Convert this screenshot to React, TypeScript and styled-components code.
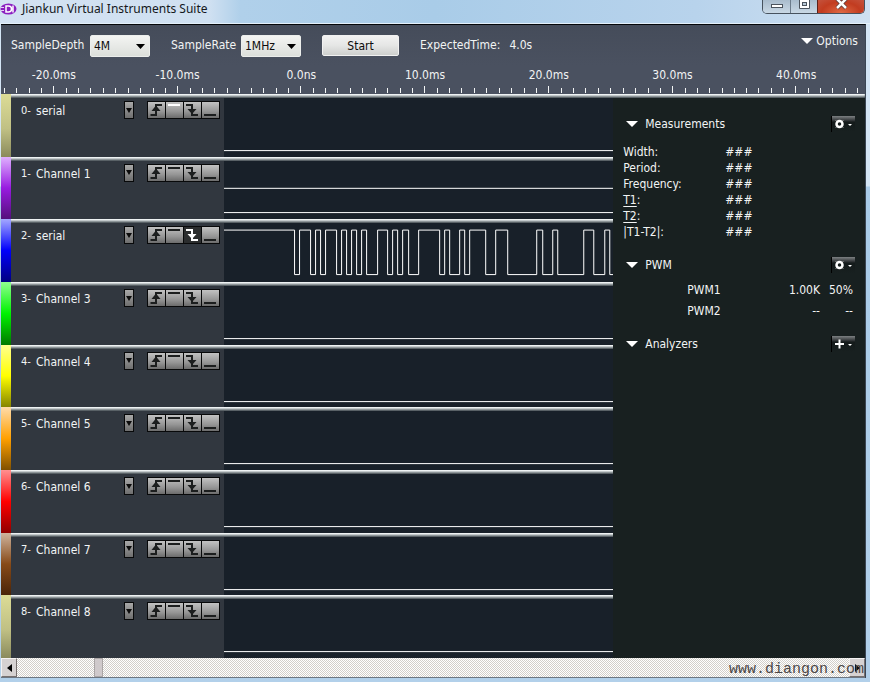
import React, { useState } from "react";
import styled, { createGlobalStyle } from "styled-components";

const Global = createGlobalStyle`
  * { box-sizing: border-box; }
  body { margin: 0; background: #b4d0ea; }
  button, select, input { font: inherit; margin: 0; padding: 0; }
`;

const uiFont = `"DejaVu Sans Condensed", "DejaVu Sans", sans-serif`;

const Window = styled.div`
  position: relative;
  display: flex;
  flex-direction: column;
  min-height: 100vh;
  padding: 0 4px 4px 1px;
  font: 12px/16px ${uiFont};
  font-stretch: condensed;
  color: #f2f4f4;
  background: linear-gradient(#d4e5f5 0, #d4e5f5 186px, #a9cbe8 187px, #b2d0ea 100%);
  overflow: hidden;
`;

const TitleBar = styled.header`
  display: flex;
  align-items: flex-start;
  height: 24px;
  margin: 0 -4px 0 -1px;
  padding-right: 5px;
  border-bottom: 1px solid #e4f0fa;
  background: linear-gradient(90deg, #d3e2f2 0, #cfe0f1 210px, #b0d0ea 240px, #a9cce8 50%, #b8d3ec 80%, #cfe0f1 100%);
`;

const Title = styled.h1`
  flex: 1;
  display: flex;
  align-items: center;
  gap: 5px;
  margin: 0;
  font: 12px/18px "Noto Sans", "Open Sans", sans-serif;
  color: #15181c;
`;

const WindowButtons = styled.div`
  display: flex;
  height: 14px;
  border: 1px solid #47525e;
  border-top: 0;
  border-radius: 0 0 5px 5px;
  overflow: hidden;
`;

const WindowButton = styled.button<{ $close?: boolean }>`
  display: flex;
  justify-content: center;
  width: ${(p) => (p.$close ? 47 : 27)}px;
  border: 0;
  border-left: ${(p) => (p.$close ? "1px solid #5d2018" : "1px solid #6b7b8b")};
  background: ${(p) =>
    p.$close
      ? "radial-gradient(ellipse at 50% 100%, #e06a45, #c23c20 60%, #c4533e)"
      : "linear-gradient(#a9bccd, #c9d8e5)"};
  &:first-child { border-left: 0; }
`;

const Analyzer = styled.main`
  flex: 1;
  display: flex;
  flex-direction: column;
  border-top: 1px solid #05070a;
  border-right: 1px solid #3b4654;
  background: #182020;
`;

const Toolbar = styled.div`
  display: flex;
  align-items: flex-start;
  gap: 21px;
  height: 40px;
  padding: 10px 7px 0 10px;
  background: linear-gradient(#454c5a, #4a5160);
`;

const Field = styled.div<{ $label: number }>`
  display: grid;
  grid-template-columns: ${(p) => p.$label}px 60px;
  line-height: 20px;
`;

const SelectBox = styled.div<{ $h: number }>`
  display: grid;
  align-items: center;
  height: ${(p) => p.$h}px;
  > * { grid-area: 1 / 1; }
  > svg { justify-self: end; margin-right: 5px; pointer-events: none; }
`;

const Select = styled.select`
  appearance: none;
  width: 100%;
  height: 100%;
  padding-left: 3px;
  border: 1px solid #eceeec;
  border-radius: 2px;
  color: #0c0c0c;
  background: linear-gradient(#f3f4f2, #dcdfdb);
`;

const StartButton = styled.button`
  width: 77px;
  height: 21px;
  border: 1px solid #f1f1f1;
  border-radius: 2px;
  color: #0c0c0c;
  background: linear-gradient(#f2f2f2, #e5e6e5 50%, #cdcfcd);
`;

const Expected = styled.output`
  display: flex;
  gap: 9px;
  line-height: 20px;
`;

const OptionsButton = styled.button`
  display: flex;
  align-items: center;
  gap: 3px;
  margin-left: auto;
  height: 12px;
  border: 0;
  color: inherit;
  background: none;
`;

const Ruler = styled.div`
  display: flex;
  height: 29px;
  background: #4a5160;
  overflow: hidden;
`;

const RulerTrack = styled.div`
  flex: 1;
  display: flex;
  margin-left: -9px;
  margin-right: 7px;
`;

const RulerCell = styled.div`
  flex: 1;
  display: flex;
  flex-direction: column;
  justify-content: space-between;
  text-align: center;
  line-height: 20px;
  svg { display: block; width: 100%; height: 8px; overflow: visible; }
`;

const groove = "linear-gradient(#eef2f3 0 1px, #c3c9cb 1px 2px, #8d9598 2px 3px, #596166 3px 4px)";

const Body = styled.div`
  flex: 1;
  display: grid;
  grid-template-columns: minmax(0, 613fr) minmax(0, 252fr);
`;

const Channels = styled.section`
  display: flex;
  flex-direction: column;
`;

const Channel = styled.div`
  flex: 1 1 62px;
  display: grid;
  grid-template-columns: 10px 213px minmax(0, 1fr);
`;

const Stripe = styled.div<{ $colors: string }>`
  background: linear-gradient(${(p) => p.$colors});
`;

const ChannelHead = styled.div`
  display: flex;
  align-items: flex-start;
  padding: 7px 4px 0 10px;
  background: ${groove} top / 100% 4px no-repeat, #31373f;
`;

const ChannelName = styled.div`
  flex: 1;
  display: flex;
  gap: 3px;
  line-height: 20px;
`;

const ChannelNumber = styled.span`
  width: 12px;
  font-size: 11px;
  white-space: nowrap;
`;

const MenuButton = styled.button`
  display: grid;
  place-items: center;
  width: 10px;
  height: 18px;
  margin-right: 13px;
  border: 1px solid #08090a;
  background: linear-gradient(#a8a8a8, #6e6e6e);
`;

const Triggers = styled.div`
  display: flex;
  gap: 1px;
  height: 18px;
  padding: 1px;
  background: #08090a;
`;

const TriggerButton = styled.button<{ $on?: boolean; $dark?: boolean }>`
  width: 17px;
  height: 16px;
  border: 0;
  color: ${(p) => (p.$on ? "#ffffff" : "#1c1e1e")};
  background: ${(p) => (p.$dark ? "#2b2d2e" : "linear-gradient(#c2c2c2, #959595 60%, #6c6c6c)")};
  svg { display: block; }
`;

const Plot = styled.div`
  display: flex;
  padding-top: 4px;
  background: ${groove} top / 100% 4px no-repeat, #182029;
  svg { flex: 1; width: 100%; height: 100%; min-height: 0; }
`;

const Side = styled.aside`
  padding: 18px 10px 0 10px;
  background: ${groove} top / 100% 4px no-repeat, #182020;
`;

const PanelHead = styled.div`
  display: flex;
  justify-content: space-between;
  align-items: center;
  height: 24px;
`;

const PanelToggle = styled.button`
  display: flex;
  align-items: center;
  gap: 7px;
  padding-left: 3px;
  border: 0;
  color: inherit;
  background: none;
`;

const GearButton = styled.button`
  display: grid;
  place-items: center;
  width: 24px;
  height: 16px;
  border: 0;
  border-left: 1px solid #000;
  background: linear-gradient(#7d8183, #2a2e30 5px, #10151580 6px, #182020);
`;

const Measures = styled.table`
  margin: 8px 0 13px;
  border-spacing: 0;
  th, td { padding: 0; text-align: left; font-weight: normal; }
  th { width: 102px; }
  a { color: inherit; text-underline-offset: 2px; }
`;

const PwmTable = styled.table`
  width: 100%;
  margin: 3px 0 10px;
  border-spacing: 0;
  line-height: 21px;
  th, td { padding: 0; font-weight: normal; text-align: right; }
  th { padding-left: 64px; text-align: left; }
  td:last-child { width: 35px; padding-right: 2px; }
`;

const ScrollRow = styled.div`
  display: flex;
  height: 20px;
  border-bottom: 1px solid #6c7682;
  background: repeating-conic-gradient(#d2cfca 0 25%, #ffffff 0 50%) 0 0 / 2px 2px;
`;

const ScrollButton = styled.button`
  display: grid;
  place-items: center;
  width: 16px;
  border: 1px solid #f4f2f2;
  border-right-color: #77706f;
  border-bottom-color: #77706f;
  background: #d6d2d2;
`;

const ScrollRange = styled.input`
  appearance: none;
  flex: 1;
  min-width: 0;
  height: 19px;
  background: none;
  &::-webkit-slider-thumb {
    appearance: none;
    width: 9px;
    height: 19px;
    border: 1px solid #aaa5a5;
    background: #cfc9cb;
  }
`;

const Watermark = styled.div`
  position: absolute;
  right: 6px;
  bottom: 2px;
  font: 15px/20px "Liberation Mono", monospace;
  color: #4a4646;
  pointer-events: none;
`;

const Down = ({ w = 12, h = 6, fill = "#fff" }: { w?: number; h?: number; fill?: string }) => (
  <svg width={w} height={h} viewBox="0 0 12 6" preserveAspectRatio="none" aria-hidden="true">
    <path d="M0 0H12L6 6Z" fill={fill} />
  </svg>
);

const triggerPaths = [
  <><path d="M2.500 13H8V3h6" /><path d="M3.500 9 8 3.500 12.500 9z" fill="currentColor" stroke="none" /></>,
  <path d="M2 3h12" />,
  <><path d="M2 3h6v10h6" /><path d="M3.500 7h9L8 12z" fill="currentColor" stroke="none" /></>,
  <path d="M2 13h12" />,
];
const triggerNames = ["Rising edge", "High level", "Falling edge", "Low level"];

const khaki = "#dcdc96, #c0c084 55%, #8a8a5c";
const channels = [
  { name: "serial", colors: khaki },
  { name: "Channel 1", colors: "#dfb0ff, #981be0 50%, #54107c" },
  { name: "serial", colors: "#a4a8ff, #0000fa 50%, #000080" },
  { name: "Channel 3", colors: "#90ff90, #00f200 50%, #007800" },
  { name: "Channel 4", colors: "#ffff90, #ffff00 50%, #848400" },
  { name: "Channel 5", colors: "#ffdcac, #ffa000 50%, #805000" },
  { name: "Channel 6", colors: "#ff9090, #ff0000 50%, #900000" },
  { name: "Channel 7", colors: "#cfb49e, #874a18 50%, #4a2408" },
  { name: "Channel 8", colors: khaki },
];

const edges = [
  70, 75, 86, 91, 96, 101, 112, 117, 122, 127, 132, 137, 142, 153, 163, 168, 173, 178, 184, 194,
  215, 220, 225, 235, 240, 245, 261, 271, 283, 312, 318, 328, 333, 359, 369, 380, 385,
];

const serialTrace = () => {
  let high = true;
  let d = "M0 7";
  for (const x of edges) {
    high = !high;
    d += `H${x + 0.5}V${high ? 7 : 51}`;
  }
  return d + "H389";
};

const traceFor = (i: number) => {
  if (i === 1) return "M0 27H389M0 51H389";
  if (i === 2) return serialTrace();
  return "M0 52H389";
};

const TriggerGroup = ({ initial }: { initial: number }) => {
  const [on, setOn] = useState(initial);
  return (
    <Triggers role="group" aria-label="Trigger">
      {triggerPaths.map((p, k) => (
        <TriggerButton
          key={k}
          $on={on === k}
          $dark={on === k && k % 2 === 0}
          aria-label={triggerNames[k]}
          aria-pressed={on === k}
          onClick={() => setOn(k)}
        >
          <svg width="17" height="16" viewBox="0 0 17 16" fill="none" stroke="currentColor" strokeWidth="2">
            {p}
          </svg>
        </TriggerButton>
      ))}
    </Triggers>
  );
};

const Panel = ({ title, plus }: { title: string; plus?: boolean }) => (
  <PanelHead>
    <PanelToggle><Down />{title}</PanelToggle>
    <GearButton aria-label={`${title} settings`}>
      <svg width="20" height="12" viewBox="0 0 20 12" fill="none" stroke="#fff" strokeWidth="2">
        {plus ? <path d="M2 6h9M6.500 1.500v9" /> : <><circle cx="6.500" cy="6" r="3" strokeWidth="2.500" /><path d="M3 2.500l1 1M10 2.500l-1 1M3 9.500l1-1M10 9.500l-1-1" strokeWidth="1" /></>}
        <path d="M15 6h4l-2 2z" fill="#fff" stroke="none" />
      </svg>
    </GearButton>
  </PanelHead>
);

const measures = ["Width:", "Period:", "Frequency:", "T1", "T2", "|T1-T2|:"];
const times = ["-20.0ms", "-10.0ms", "0.0ns", "10.0ms", "20.0ms", "30.0ms", "40.0ms"];

export default function App() {
  return (
    <>
      <Global />
      <Window>
        <TitleBar>
          <Title>
            <svg width="17" height="14" viewBox="0 0 17 14" aria-hidden="true">
              <ellipse cx="8.500" cy="7" rx="8" ry="5.500" fill="#8b1fc0" />
              <path d="M1 5.500h3M1 8.500h3" stroke="#e8cff4" />
              <path d="M6 4v6h2.500a3 3 0 0 0 0-6zM13 3.500v7" fill="none" stroke="#fff" strokeWidth="1.500" />
            </svg>
            Jiankun Virtual Instruments Suite
          </Title>
          <WindowButtons>
            <WindowButton aria-label="Minimize">
              <svg width="13" height="12" viewBox="0 0 13 12"><rect x="1.500" y="4.500" width="11" height="3" fill="#fff" stroke="#4b535d" /></svg>
            </WindowButton>
            <WindowButton aria-label="Maximize">
              <svg width="13" height="12" viewBox="0 0 13 12"><path d="M1.500-1V8.500h10V-1" fill="#fff" stroke="#4b535d" /><rect x="4.500" y="2.500" width="4" height="3" fill="#b8c8d6" stroke="#4b535d" /></svg>
            </WindowButton>
            <WindowButton $close aria-label="Close">
              <svg width="13" height="12" viewBox="0 0 13 12"><path d="M2-1 11 8M11-1 2 8" stroke="#5a3a3a" strokeWidth="4" /><path d="M2-1 11 8M11-1 2 8" stroke="#fff" strokeWidth="2.500" /></svg>
            </WindowButton>
          </WindowButtons>
        </TitleBar>
        <Analyzer>
          <Toolbar>
            <Field $label={79}>
              <label htmlFor="depth">SampleDepth</label>
              <SelectBox $h={21}>
                <Select id="depth" defaultValue="4M"><option>4M</option><option>8M</option></Select>
                <Down w={9} h={5} fill="#000" />
              </SelectBox>
            </Field>
            <Field $label={70}>
              <label htmlFor="rate">SampleRate</label>
              <SelectBox $h={18}>
                <Select id="rate" defaultValue="1MHz"><option>1MHz</option><option>2MHz</option></Select>
                <Down w={9} h={5} fill="#000" />
              </SelectBox>
            </Field>
            <StartButton>Start</StartButton>
            <Expected><span>ExpectedTime:</span><span>4.0s</span></Expected>
            <OptionsButton><Down />Options</OptionsButton>
          </Toolbar>
          <Ruler>
            <RulerTrack>
              {times.map((t) => (
                <RulerCell key={t}>
                  {t}
                  <svg viewBox="0 0 100 8" preserveAspectRatio="none" shapeRendering="crispEdges">
                    {[10, 20, 30, 40, 50, 60, 70, 80, 90, 100].map((x) => (
                      <path key={x} d={`M${x} ${x === 50 ? 0 : 2}V7`} stroke="#f4f6f6" vectorEffect="non-scaling-stroke" />
                    ))}
                  </svg>
                </RulerCell>
              ))}
            </RulerTrack>
          </Ruler>
          <Body>
            <Channels>
              {channels.map((c, i) => (
                <Channel key={i}>
                  <Stripe $colors={c.colors} />
                  <ChannelHead>
                    <ChannelName><ChannelNumber>{i}-</ChannelNumber><span>{c.name}</span></ChannelName>
                    <MenuButton aria-label={`${c.name} menu`}><Down w={6} h={5} fill="#0c0c0c" /></MenuButton>
                    <TriggerGroup initial={i === 0 ? 1 : i === 2 ? 2 : -1} />
                  </ChannelHead>
                  <Plot>
                    <svg viewBox="0 0 389 58" preserveAspectRatio="none" shapeRendering="crispEdges">
                      <path d={traceFor(i)} fill="none" stroke="#fff" vectorEffect="non-scaling-stroke" />
                    </svg>
                  </Plot>
                </Channel>
              ))}
            </Channels>
            <Side>
              <Panel title="Measurements" />
              <Measures>
                <tbody>
                  {measures.map((m) => (
                    <tr key={m}>
                      <th scope="row">{m.length === 2 ? <><a href={`#${m}`}>{m}</a>:</> : m}</th>
                      <td>###</td>
                    </tr>
                  ))}
                </tbody>
              </Measures>
              <Panel title="PWM" />
              <PwmTable>
                <tbody>
                  <tr><th scope="row">PWM1</th><td>1.00K</td><td>50%</td></tr>
                  <tr><th scope="row">PWM2</th><td>--</td><td>--</td></tr>
                </tbody>
              </PwmTable>
              <Panel title="Analyzers" plus />
            </Side>
          </Body>
          <ScrollRow>
            <ScrollButton aria-label="Scroll left"><svg width="5" height="8" viewBox="0 0 5 8"><path d="M5 0v8L0 4z" /></svg></ScrollButton>
            <ScrollRange type="range" aria-label="Time position" min={0} max={1000} defaultValue={94} />
            <ScrollButton aria-label="Scroll right"><svg width="5" height="8" viewBox="0 0 5 8"><path d="M0 0v8l5-4z" /></svg></ScrollButton>
          </ScrollRow>
        </Analyzer>
        <Watermark>www.diangon.com</Watermark>
      </Window>
    </>
  );
}
